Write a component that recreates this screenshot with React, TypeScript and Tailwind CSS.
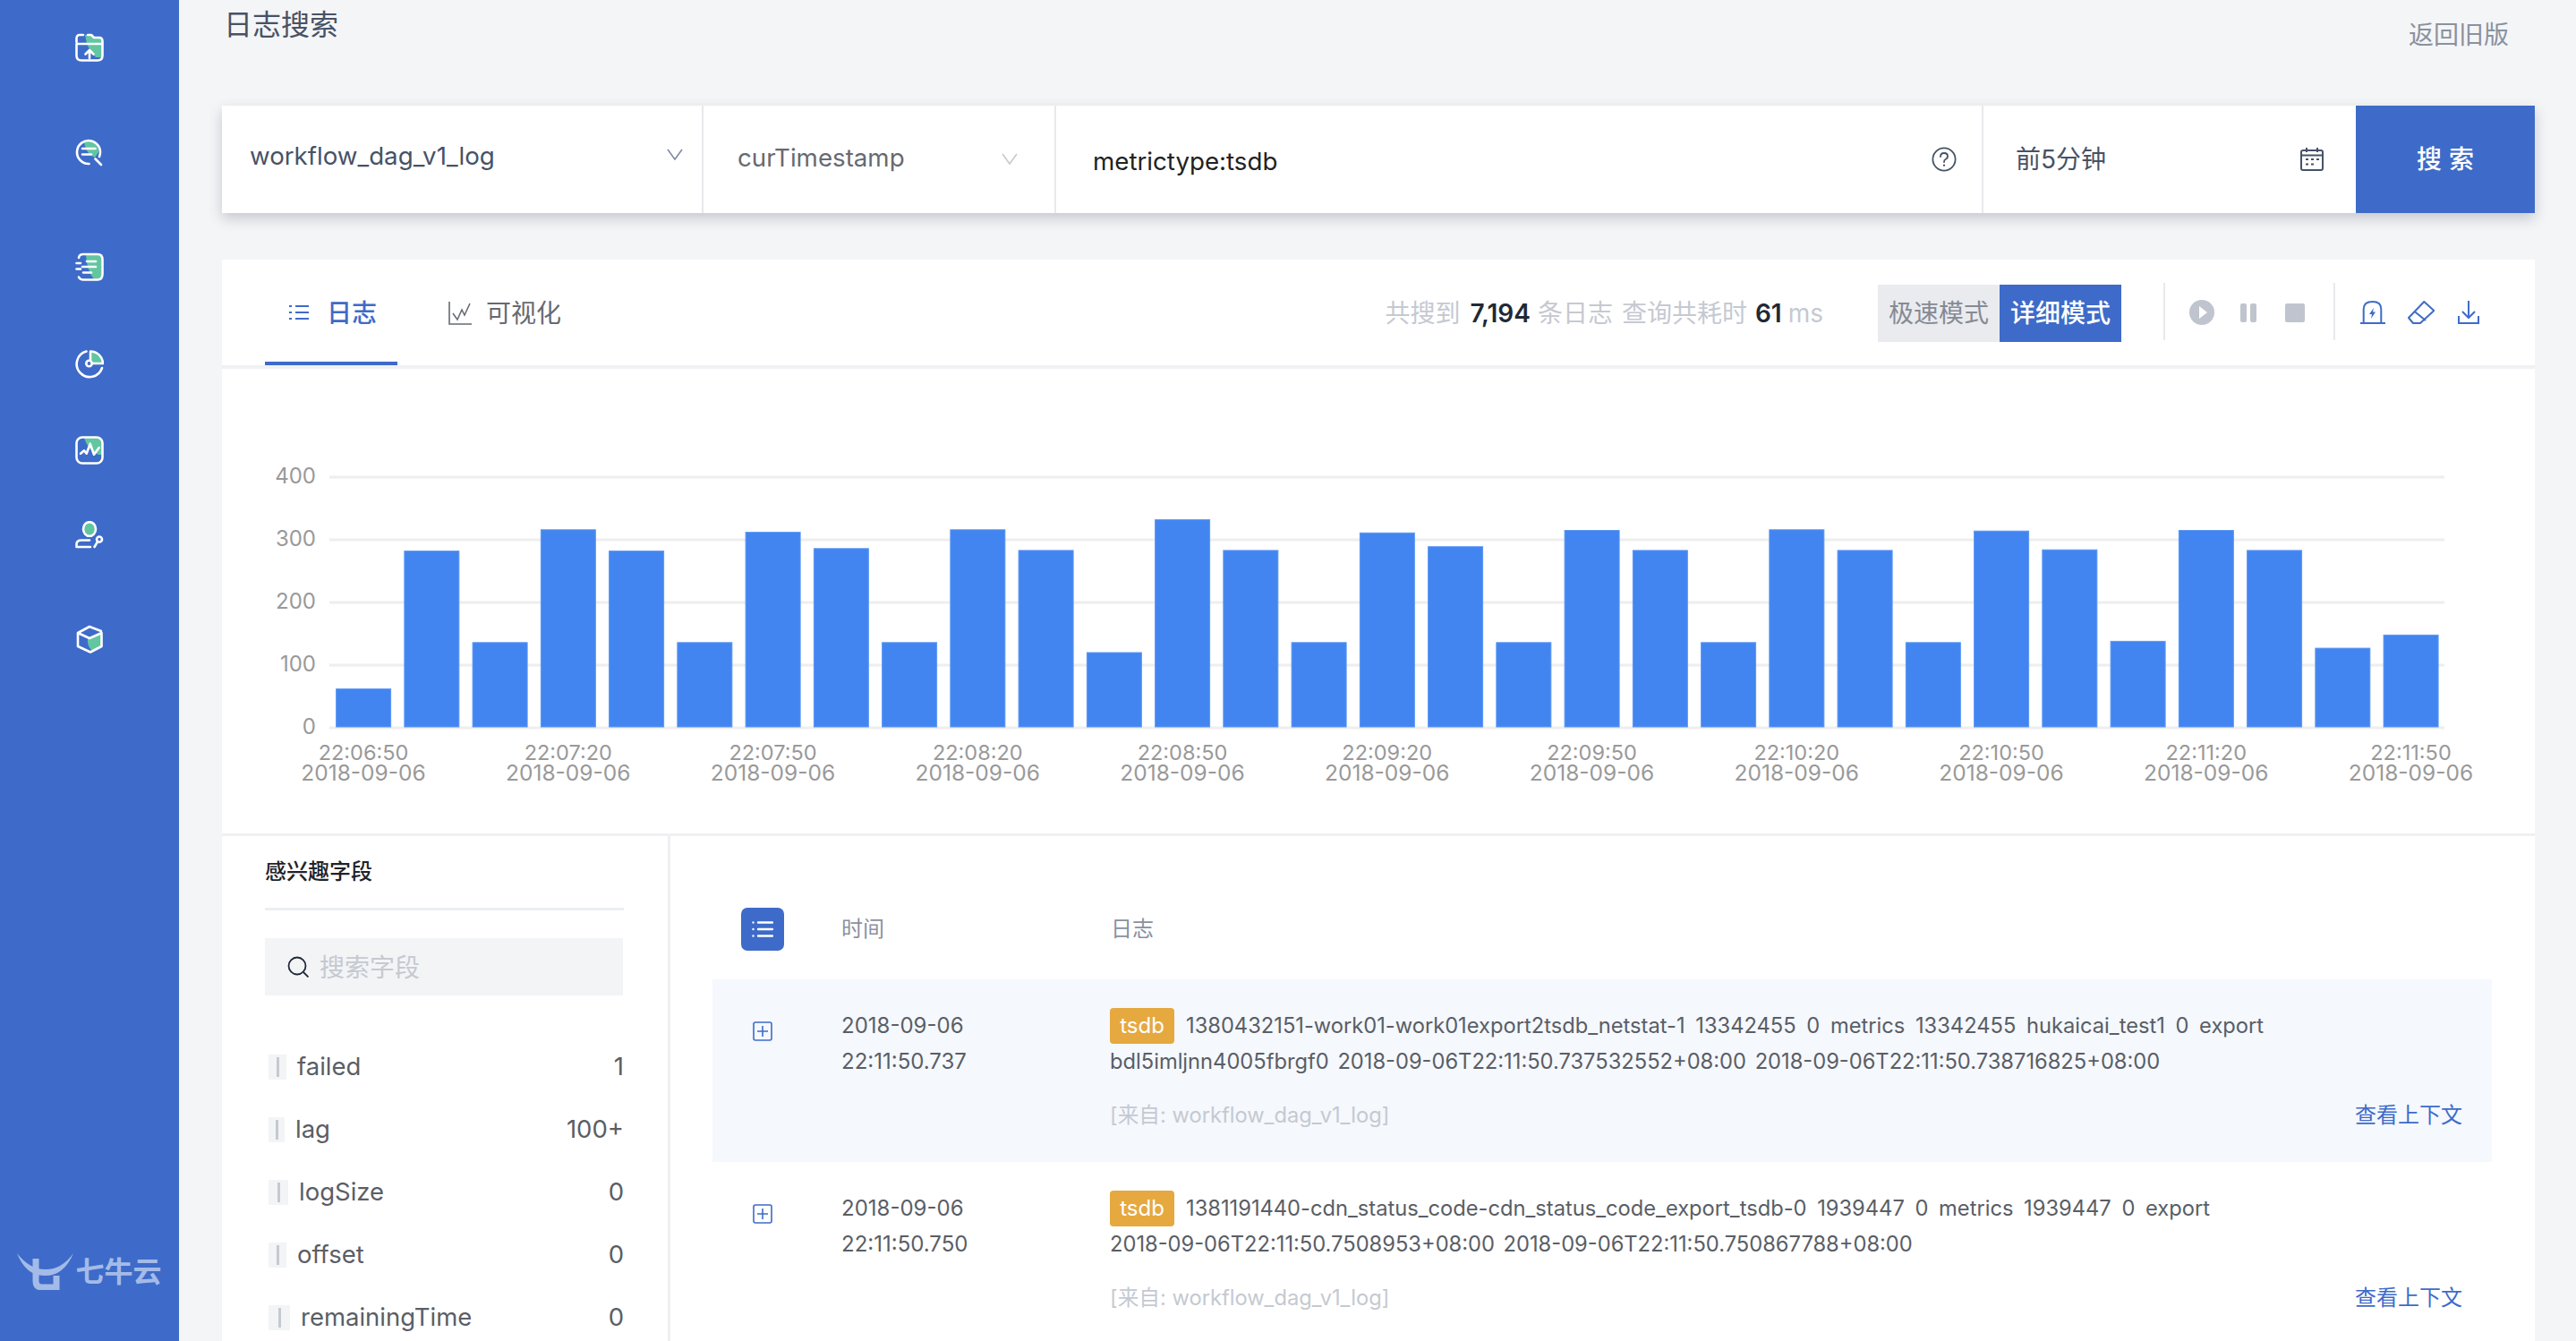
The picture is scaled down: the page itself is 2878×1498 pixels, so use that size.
const values = [62, 282, 136, 316, 282, 136, 312, 286, 136, 316, 283, 120, 332, 283, 136, 311, 289, 136, 315, 283, 136, 316, 283, 136, 314, 284, 138, 315, 283, 127, 148];
const times = ["22:06:50", "22:07:20", "22:07:50", "22:08:20", "22:08:50", "22:09:20", "22:09:50", "22:10:20", "22:10:50", "22:11:20", "22:11:50"];
const fields = [
  { name: "failed", count: "1", handle: "w-[20px]" },
  { name: "lag", count: "100+", handle: "w-[18px]" },
  { name: "logSize", count: "0", handle: "w-[22px]" },
  { name: "offset", count: "0", handle: "w-[20px]" },
  { name: "remainingTime", count: "0", handle: "w-[24px]" },
];
const logs = [
  {
    date: "2018-09-06",
    time: "22:11:50.737",
    line1: "1380432151-work01-work01export2tsdb_netstat-1 13342455 0 metrics 13342455 hukaicai_test1 0 export",
    line2: "bdl5imljnn4005fbrgf0 2018-09-06T22:11:50.737532552+08:00 2018-09-06T22:11:50.738716825+08:00",
    bg: "bg-[#f5f8fd]",
  },
  {
    date: "2018-09-06",
    time: "22:11:50.750",
    line1: "1381191440-cdn_status_code-cdn_status_code_export_tsdb-0 1939447 0 metrics 1939447 0 export",
    line2: "2018-09-06T22:11:50.7508953+08:00 2018-09-06T22:11:50.750867788+08:00",
    bg: "bg-white",
  },
];

function NavIcon({ children, className }: { children: React.ReactNode; className: string }) {
  return (
    <svg viewBox="0 0 32 32" className={`h-[32px] w-[32px] shrink-0 ${className}`} fill="none" stroke="#fff" strokeWidth="2.6" strokeLinecap="round" strokeLinejoin="round">
      {children}
    </svg>
  );
}

const green = "#62c6a0";

function Sidebar() {
  return (
    <aside className="flex h-full w-[200px] shrink-0 flex-col items-center bg-[#3e6bc9]">
      <NavIcon className="mt-[37px]">
        <path d="M11 2H18L21 5H27Q30 5 30 9V27H23Q13 18 11 2Z" fill={green} stroke="none" />
        <path d="M9 2H5Q1.5 2 1.5 6V10M1.5 12H30.5M1.5 12V25Q1.5 30.5 7 30.5H25Q30.5 30.5 30.5 25V9Q30.5 5 27 5H21L18 2H14M16 28V19M11.5 23.5 16 19l4.5 4.5" />
      </NavIcon>
      <NavIcon className="mt-[85px]">
        <path d="M10 5A11 11 0 0 1 26 16L22 22Q12 18 10 5Z" fill={green} stroke="none" />
        <path d="M15.5 29A13 13 0 1 1 27 21M22.5 23.5 29 30M8 12H22.5M8 18.5H18" />
      </NavIcon>
      <NavIcon className="mt-[96px]">
        <path d="M12 3H25Q29.5 3 29.5 8V24Q29.5 30 25 30H21Q13 20 12 3Z" fill={green} stroke="none" />
        <path d="M4 6Q4.5 2 9 2H25Q30.5 2 30.5 8V24Q30.5 30.5 25 30.5H9Q5.5 30.5 4 27.5M1.5 12H6M1.5 18.5H6M13 10H23M8 16H23M9 22.5H18" />
      </NavIcon>
      <NavIcon className="mt-[77px]">
        <path d="M17 1.5A14 14 0 0 1 31 15H17Z" fill={green} stroke="none" />
        <path d="M12.5 1.5A14.5 14.5 0 1 0 30 20M17 1.5A14 14 0 0 1 31 15H19.5M17 1.5V11" />
        <circle cx="15.5" cy="15" r="3.2" />
      </NavIcon>
      <NavIcon className="mt-[64px]">
        <path d="M10 2H25Q30 2 30 8V21H26Q14 16 10 2Z" fill={green} stroke="none" />
        <rect x="1.5" y="1.5" width="29" height="29" rx="6.5" />
        <path d="M6 19.7 10 16.3 12.7 19.7 16.7 8.7 21 20.7 26.7 13" />
      </NavIcon>
      <NavIcon className="mt-[63px]">
        <ellipse cx="16" cy="9" rx="7" ry="7.8" fill={green} />
        <path d="M1.5 29V26Q1.5 21.5 7 21.5H16M1.5 29H17M24.5 24 21.5 29" />
        <circle cx="27" cy="20.5" r="3" />
      </NavIcon>
      <NavIcon className="mt-[84px]">
        <path d="M14 15L29 9V24L19 29Q13 24 14 15Z" fill={green} stroke="none" />
        <path d="M3 9 16 2 29 7M29.5 9V24L17 30.5 3 24V9L16 15 29.5 9" />
      </NavIcon>
      <div className="mb-[57px] mt-auto flex items-center text-[#a4bbe8]">
        <svg viewBox="0 0 63 41" className="h-[41px] w-[63px]" fill="currentColor">
          <path d="M0 0Q14 18 32 18Q50 18 63 0Q52 26 30 25Q10 25 0 0Z" />
          <path d="M21 6V31Q21 38 28 38H44V25" fill="none" stroke="currentColor" strokeWidth="7" />
        </svg>
        <span className="ml-[2px] text-[32px] leading-[41px] font-semibold">七牛云</span>
      </div>
    </aside>
  );
}

function Chevron({ className }: { className: string }) {
  return (
    <svg viewBox="0 0 18 13" className={`h-[13px] w-[18px] ${className}`} fill="none" stroke="currentColor" strokeWidth="1.6">
      <path d="M1 1 9 12 17 1" />
    </svg>
  );
}

function SearchBar() {
  return (
    <div className="flex h-[120px] w-[2584px] bg-white shadow-[0_6px_14px_rgba(50,60,80,0.24)]">
      <div className="flex w-[538px] items-center border-r-2 border-[#e8e9ec] pl-[31px] pr-[21px] pb-[6px] text-[#475266]">
        <span className="text-[27.7px]">workflow_dag_v1_log</span>
        <Chevron className="ml-auto mb-[6px] text-[#7f8ba0]" />
      </div>
      <div className="flex w-[394px] items-center border-r-2 border-[#e8e9ec] pl-[38px] pr-[41px] pb-[2px] text-[#666a72]">
        <span className="text-[27.7px]">curTimestamp</span>
        <Chevron className="ml-auto text-[#c5c9d1]" />
      </div>
      <div className="flex w-[1036px] items-center border-r-2 border-[#e8e9ec] pl-[41px] pr-[28px] text-[#222]">
        <span className="pt-[6px] text-[27.7px]">metrictype:tsdb</span>
        <svg viewBox="0 0 28 28" className="ml-auto h-[28px] w-[28px]" fill="none" stroke="#475266" strokeWidth="1.8" strokeLinecap="round">
          <circle cx="14" cy="14" r="12.6" />
          <path d="M10 11Q10 7 14 7Q18 7 18 10.5Q18 13 15.5 14Q14 14.7 14 17" />
          <path d="M14 20.5V20.8" strokeWidth="2.2" />
        </svg>
      </div>
      <div className="flex w-[416px] items-center pl-[36px] pr-[36px] text-[#475266]">
        <span className="text-[28px]">前5分钟</span>
        <svg viewBox="0 0 26 26" className="ml-auto h-[26px] w-[26px]" fill="none" stroke="#475266" strokeWidth="2">
          <rect x="1" y="3" width="24" height="22" rx="2" />
          <path d="M1 8.5H25M7 0V5M19 0V5M6 13H9M12 13H15M18 13H21M6 18.5H9M12 18.5H15" />
        </svg>
      </div>
      <div className="flex w-[200px] items-center justify-center bg-[#3e6bc9] text-[28px] font-medium text-white">
        搜<span className="ml-[8px]">索</span>
      </div>
    </div>
  );
}

function Toolbar() {
  return (
    <div className="flex h-[122px] border-b-4 border-[#f0f1f4] pl-[48px] pr-[62px]">
      <div className="flex w-[148px] items-center border-b-4 border-[#3e6bc9] pl-[27px] pt-[4px] text-[#3e6bc9]">
        <svg viewBox="0 0 22 18" className="h-[18px] w-[22px]" fill="none" stroke="currentColor" strokeWidth="2">
          <path d="M0 2H3M7 2H22M0 9H3M7 9H22M0 16H3M7 16H22" />
        </svg>
        <span className="ml-[20px] pt-[2px] text-[28px] font-medium">日志</span>
      </div>
      <div className="ml-[57px] flex items-center pt-[2px] text-[#666a72]">
        <svg viewBox="0 0 26 26" className="h-[26px] w-[26px]" fill="none" stroke="currentColor" strokeWidth="1.6">
          <path d="M1 0V25H26M5 13 10 20 15 9 18 15 24 2" />
        </svg>
        <span className="ml-[16px] text-[28px]">可视化</span>
      </div>
      <div className="ml-auto flex items-center pt-[2px] text-[28px] text-[#c5c9d1]">
        <span>共搜到</span>
        <span className="ml-[11px] font-semibold text-[#1f2937]">7,194</span>
        <span className="ml-[8px]">条日志</span>
        <span className="ml-[10px]">查询共耗时</span>
        <span className="ml-[9px] font-semibold text-[#1f2937]">61</span>
        <span className="ml-[7px]">ms</span>
      </div>
      <div className="ml-[61px] flex items-center pt-[2px] text-[28px]">
        <span className="flex h-[64px] w-[136px] items-center justify-center bg-[#e9ebef] text-[#858a94]">极速模式</span>
        <span className="flex h-[64px] w-[136px] items-center justify-center bg-[#3e6bc9] font-medium text-white">详细模式</span>
      </div>
      <div className="ml-[47px] flex items-center">
        <div className="mb-[2px] h-[64px] w-[2px] bg-[#e8e9ec]" />
      </div>
      <div className="ml-[27px] flex items-center">
        <svg viewBox="0 0 28 28" className="h-[28px] w-[28px]">
          <circle cx="14" cy="14" r="14" fill="#c0c4ce" />
          <path d="M11 7 20 14 11 21Z" fill="#fff" />
        </svg>
        <div className="ml-[29px] flex w-[18px] justify-between">
          <div className="h-[21px] w-[7px] rounded-[2px] bg-[#c0c4ce]" />
          <div className="h-[21px] w-[7px] rounded-[2px] bg-[#c0c4ce]" />
        </div>
        <div className="ml-[32px] h-[21px] w-[22px] rounded-[2px] bg-[#c0c4ce]" />
      </div>
      <div className="ml-[32px] flex items-center">
        <div className="mb-[2px] h-[64px] w-[2px] bg-[#e8e9ec]" />
      </div>
      <div className="ml-[28px] flex items-center text-[#3e6bc9]">
        <svg viewBox="0 0 28 26" className="h-[26px] w-[28px]" fill="none" stroke="currentColor" strokeWidth="2">
          <path d="M3.7 24.3V9.3Q3.7 1 13.7 1Q23.3 1 23.3 9.3V24.3M0 25H28" />
          <path d="M15 8 10 15H13L12 20 17 12.5H14Z" fill="currentColor" stroke="none" />
        </svg>
        <svg viewBox="0 0 30 26" className="ml-[25px] h-[26px] w-[30px]" fill="none" stroke="currentColor" strokeWidth="2" strokeLinejoin="round">
          <path d="M18.3 1 29.3 11 14 25H6L1 19ZM7.7 12 20 22" />
        </svg>
        <svg viewBox="0 0 24 26" className="ml-[26px] h-[26px] w-[24px]" fill="none" stroke="currentColor" strokeWidth="2">
          <path d="M1 17V25H23V17M12 0V19M5 12 12 19 19 12" />
        </svg>
      </div>
    </div>
  );
}

function Chart() {
  return (
    <div className="h-[522px] border-b-[3px] border-[#eff0f3]">
      <svg viewBox="0 0 2584 519" className="h-[519px] w-[2584px]">
        {[0, 1, 2, 3, 4].map((n) => (
          <g key={n}>
            <line x1="120" x2="2483" y1={401 - n * 70} y2={401 - n * 70} stroke="#eeeeee" strokeWidth="3" />
            <text x="105" y={399 - n * 70} textAnchor="end" dominantBaseline="central" className="fill-[#999] text-[24px]">
              {n * 100}
            </text>
          </g>
        ))}
        {values.map((v, i) => (
          <rect key={i} x={127.6 + i * 76.25} y={401 - v * 0.7} width="61" height={v * 0.7 - 1} fill="#4285f0" stroke="#5c97f5" strokeWidth="1" />
        ))}
        {times.map((t, i) => (
          <g key={t} textAnchor="middle" className="fill-[#999]">
            <text x={158 + i * 228.75} y="428" dominantBaseline="central" className="text-[23.5px]">{t}</text>
            <text x={158 + i * 228.75} y="451" dominantBaseline="central" className="text-[24.5px]">2018-09-06</text>
          </g>
        ))}
      </svg>
    </div>
  );
}

function FieldPanel() {
  return (
    <div className="w-[501px] shrink-0 border-r-[3px] border-[#eff0f3] pl-[48px] pr-[49px] pt-[24px]">
      <div className="w-[401px] border-b-[3px] border-[#eceef2] pb-[24px] text-[24px] leading-[32px] font-medium text-[#1f2329]">感兴趣字段</div>
      <div className="mt-[31px] flex h-[64px] w-[400px] items-center bg-[#f3f4f6] pl-[25px]">
        <svg viewBox="0 0 24 24" className="h-[24px] w-[24px]" fill="none" stroke="#1f2937" strokeWidth="1.8">
          <circle cx="11" cy="11" r="9.5" />
          <path d="M18 18 23.5 23.5" />
        </svg>
        <span className="ml-[12px] pt-[2px] text-[28px] text-[#c5c9d1]">搜索字段</span>
      </div>
      <div className="mt-[45px]">
        {fields.map((f) => (
          <div key={f.name} className="flex h-[70px] items-center text-[27.5px] text-[#5a5e66]">
            <div className={`ml-[4px] flex h-[28px] items-center justify-center bg-[#f3f4f6] ${f.handle}`}>
              <div className="h-[22px] w-[3px] bg-[#c5c9d1]" />
            </div>
            <span className="ml-[12px]">{f.name}</span>
            <span className="ml-auto">{f.count}</span>
          </div>
        ))}
      </div>
    </div>
  );
}

function LogPanel() {
  return (
    <div className="min-w-0 flex-1 pl-[47px] pr-[48px] pt-[80px]">
      <div className="flex h-[48px] items-center text-[24px] text-[#8a919f]">
        <div className="ml-[32px] flex h-[48px] w-[48px] items-center justify-center rounded-[7px] bg-[#3e6bc9]">
          <svg viewBox="0 0 24 20" className="h-[20px] w-[24px]" fill="none" stroke="#fff" strokeWidth="2.4" strokeLinecap="round">
            <path d="M1.5 2.5V2.6M7 2.5H23M1.5 10V10.1M7 10H23M1.5 17.5V17.6M7 17.5H23" />
          </svg>
        </div>
        <span className="ml-[64px] w-[301px]">时间</span>
        <span>日志</span>
      </div>
      <div className="mt-[32px]">
        {logs.map((log) => (
          <div key={log.time} className={`flex h-[204px] pt-[32px] text-[24px] leading-[40px] text-[#5a5e66] ${log.bg}`}>
            <svg viewBox="0 0 22 22" className="ml-[45px] mt-[15px] h-[22px] w-[22px] shrink-0" fill="none" stroke="#3e6bc9" strokeWidth="1.6">
              <rect x="1" y="1" width="20" height="20" rx="2" />
              <path d="M11 5V17M5 11H17" />
            </svg>
            <div className="ml-[77px] w-[300px] shrink-0">
              <div>{log.date}</div>
              <div>{log.time}</div>
            </div>
            <div className="min-w-0 flex-1 pr-[33px]">
              <div className="flex">
                <span className="mr-[13px] flex h-[40px] w-[72px] items-center justify-center rounded-[4px] bg-[#e5a93f] text-white">tsdb</span>
                <span className="whitespace-nowrap text-[23.7px] [word-spacing:5px]">{log.line1}</span>
              </div>
              <div className="whitespace-nowrap text-[23.7px] [word-spacing:3px]">{log.line2}</div>
              <div className="mt-[20px] flex items-center">
                <span className="text-[23.7px] text-[#c5c9d1]">[来自: workflow_dag_v1_log]</span>
                <span className="ml-auto text-[#3e6bc9]">查看上下文</span>
              </div>
            </div>
          </div>
        ))}
      </div>
    </div>
  );
}

export default function App() {
  return (
    <div className="flex h-[1498px] w-[2878px] overflow-hidden bg-[#f4f5f7] [font-family:Inter,'Noto_Sans_CJK_SC',sans-serif]">
      <Sidebar />
      <main className="min-w-0 flex-1 pl-[48px] pr-[46px]">
        <div className="flex h-[118px] items-start justify-between">
          <h1 className="ml-[2px] mt-[8px] text-[32px] leading-[40px] text-[#475266]">日志搜索</h1>
          <a className="mr-[29px] mt-[20px] text-[28px] leading-[38px] text-[#8a919f]">返回旧版</a>
        </div>
        <SearchBar />
        <section className="mt-[52px] bg-white">
          <Toolbar />
          <Chart />
          <div className="flex h-[600px]">
            <FieldPanel />
            <LogPanel />
          </div>
        </section>
      </main>
    </div>
  );
}
